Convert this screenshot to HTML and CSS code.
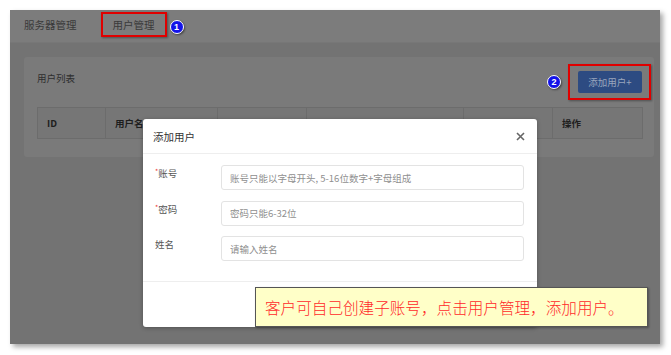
FILE: index.html
```html
<!DOCTYPE html>
<html lang="zh-CN">
<head>
    <meta charset="UTF-8">
    <title>用户管理</title>
    <link rel="stylesheet" href="styles.css">
</head>
<body>
    <div class="shot">
        <header class="nav">
            <span class="nav-item">服务器管理</span>
            <span class="nav-item active">用户管理</span>
            <span class="badge">1</span>
        </header>

        <main class="content">
            <section class="card">
                <div class="card-head">
                    <span class="card-title">用户列表</span>
                    <span class="badge badge-right">2</span>
                    <div class="btn-wrap">
                        <button class="btn-add">添加用户+</button>
                    </div>
                </div>
                <table class="user-table">
                    <thead>
                        <tr>
                            <th class="c-id">ID</th>
                            <th class="c-name">用户名</th>
                            <th class="c-3"></th>
                            <th class="c-4"></th>
                            <th class="c-5"></th>
                            <th class="c-op">操作</th>
                        </tr>
                    </thead>
                </table>
            </section>
        </main>

        <div class="modal">
            <div class="modal-head">
                <span class="modal-title">添加用户</span>
                <svg class="modal-close" width="9" height="9" viewBox="0 0 9 9">
                    <path d="M1 1L8 8M8 1L1 8" stroke="#666" stroke-width="1.6" fill="none"/>
                </svg>
            </div>
            <div class="modal-body">
                <div class="form-row">
                    <label class="form-label"><i>*</i>账号</label>
                    <input class="form-input" placeholder="账号只能以字母开头, 5-16位数字+字母组成">
                </div>
                <div class="form-row">
                    <label class="form-label"><i>*</i>密码</label>
                    <input class="form-input" placeholder="密码只能6-32位">
                </div>
                <div class="form-row">
                    <label class="form-label">姓名</label>
                    <input class="form-input" placeholder="请输入姓名">
                </div>
            </div>
            <div class="modal-foot"></div>
        </div>

        <div class="note">客户可自己创建子账号，点击用户管理，添加用户。</div>
    </div>
</body>
</html>
```

FILE: styles.css
```css
html, body {
    margin: 0;
    background: #fff;
    font-family: "Noto Sans CJK SC", "Noto Sans", sans-serif;
}
.shot {
    position: relative;
    margin: 10px;
    width: 650px;
    height: 334px;
    background: #737373;
    box-shadow: 3px 3px 5px rgba(0, 0, 0, 0.35);
    overflow: hidden;
}
.nav {
    display: flex;
    align-items: flex-start;
    height: 33px;
    padding: 2px 0 0 14px;
    box-sizing: border-box;
    background: #7c7c7c;
    border-bottom: 1px solid #777;
}
.nav-item {
    font-size: 10.5px;
    line-height: 25px;
    color: #3a3a3a;
}
.nav-item.active {
    margin-left: 24px;
    padding: 0 10px;
    border: 2px solid #e00000;
    line-height: 21px;
    box-shadow: 1px 1px 2px rgba(0, 0, 0, 0.35);
}
.badge {
    align-self: center;
    display: flex;
    align-items: center;
    justify-content: center;
    width: 14px;
    height: 14px;
    margin-left: 3px;
    box-sizing: border-box;
    border: 1.5px solid #fff;
    border-radius: 50%;
    background: #1212e8;
    color: #fff;
    font-family: "Liberation Sans", sans-serif;
    font-size: 9px;
    font-weight: bold;
    box-shadow: 1px 1px 2px rgba(0, 0, 0, 0.45);
}
.content {
    padding: 14px 6px 0 14px;
}
.card {
    height: 100px;
    padding: 7px 12px 0 13px;
    box-sizing: border-box;
    background: #7a7a7a;
    border-radius: 3px;
}
.card-head {
    display: flex;
    align-items: flex-start;
    margin-bottom: 7px;
}
.card-title {
    font-size: 9.5px;
    line-height: 28px;
    color: #2e2e2e;
}
.badge-right {
    margin-left: auto;
    margin-right: 7px;
}
.btn-wrap {
    margin-right: -9px;
    padding: 5px 7px 5px 8px;
    border: 2px solid #e00000;
    box-shadow: 1px 1px 2px rgba(0, 0, 0, 0.35);
}
.btn-add {
    display: block;
    width: 64px;
    height: 22px;
    padding: 0;
    border: none;
    border-radius: 2px;
    background: #2d4b82;
    color: #9aa6bd;
    font-family: inherit;
    font-size: 9.5px;
}
.user-table {
    width: 605px;
    border-collapse: collapse;
    table-layout: fixed;
}
.user-table th {
    box-sizing: border-box;
    height: 31px;
    padding: 0 0 0 9px;
    border: 1px solid #6c6c6c;
    background: #767676;
    text-align: left;
    font-size: 9.5px;
    color: #1e1e1e;
}
.c-id { width: 68px; }
.c-name { width: 112px; }
.c-3 { width: 89px; }
.c-4 { width: 157px; }
.c-5 { width: 89px; }
.c-op { width: 90px; }
.modal {
    position: absolute;
    left: 133px;
    top: 109px;
    width: 394px;
    height: 208px;
    background: #fff;
    border-radius: 3px;
    box-shadow: 0 1px 4px rgba(0, 0, 0, 0.3);
}
.modal-head {
    display: flex;
    align-items: center;
    justify-content: space-between;
    height: 35px;
    padding: 0 12px 0 10px;
    box-sizing: border-box;
    border-bottom: 1px solid #eee;
}
.modal-title {
    font-size: 10.5px;
    color: #333;
}
.modal-body {
    display: flex;
    flex-direction: column;
    gap: 10.5px;
    padding: 11px 13px 20px 12px;
}
.form-row {
    display: flex;
    align-items: flex-start;
}
.form-label {
    width: 66px;
    font-size: 9.5px;
    line-height: 17px;
    color: #555;
}
.form-label i {
    font-style: normal;
    color: #e33;
    font-size: 7px;
    vertical-align: top;
    line-height: 12px;
}
.form-input {
    width: 303px;
    height: 25px;
    padding: 0 8px;
    box-sizing: border-box;
    border: 1px solid #e3e3e3;
    border-radius: 3px;
    font-family: inherit;
    font-size: 9.5px;
    outline: none;
}
.form-input::placeholder {
    color: #8f8f8f;
}
.modal-foot {
    height: 45px;
    border-top: 1px solid #eee;
}
.note {
    position: absolute;
    left: 245px;
    top: 277px;
    width: 393px;
    height: 40px;
    padding-left: 9px;
    box-sizing: border-box;
    background: #ffffc8;
    border: 1px solid #555;
    color: #ff2a2a;
    font-size: 15.6px;
    font-weight: 300;
    line-height: 38px;
    white-space: nowrap;
    box-shadow: 1px 1px 2px rgba(0, 0, 0, 0.3);
}
```
